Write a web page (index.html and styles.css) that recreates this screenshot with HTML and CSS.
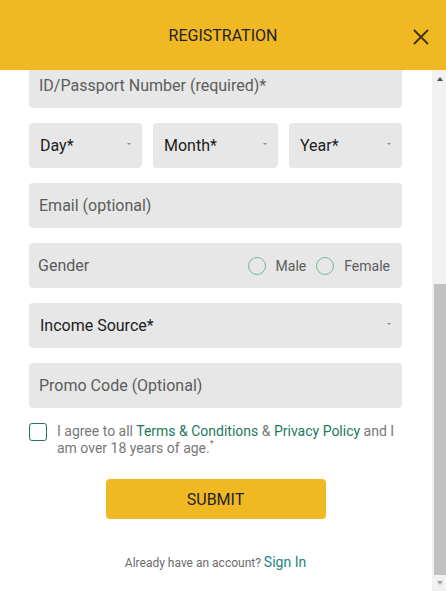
FILE: index.html
```html
<!DOCTYPE html>
<html lang="en">
<head>
  <meta charset="UTF-8">
  <meta name="viewport" content="width=device-width, initial-scale=1.0">
  <title>Registration</title>
  <link rel="stylesheet" href="styles.css">
</head>
<body>
  <div class="modal">
    <div class="modal-header">
      <h1 class="modal-title">REGISTRATION</h1>
      <button class="close-btn" aria-label="Close">
        <svg width="16" height="16" viewBox="0 0 16 16">
          <path d="M1 1 L15 15 M15 1 L1 15" stroke="#3a3216" stroke-width="1.8" fill="none"/>
        </svg>
      </button>
    </div>

    <div class="modal-main">
      <div class="modal-body" id="modal-body">
        <form class="form">
          <p class="intro">Please fill in your details below.</p>
          <input class="field" type="text" placeholder="First Name*">
          <input class="field" type="text" placeholder="Last Name*">
          <input class="field" type="tel" placeholder="Mobile Number*">
          <input class="field" type="password" placeholder="Password*">
          <input class="field" type="password" placeholder="Confirm Password*">
          <input class="field" type="text" placeholder="ID/Passport Number (required)*">

          <div class="date-row">
            <div class="select-wrap">
              <select class="field select"><option>Day*</option></select>
            </div>
            <div class="select-wrap">
              <select class="field select"><option>Month*</option></select>
            </div>
            <div class="select-wrap">
              <select class="field select"><option>Year*</option></select>
            </div>
          </div>

          <input class="field" type="email" placeholder="Email (optional)">

          <div class="field gender-row">
            <span class="gender-label">Gender</span>
            <div class="radios">
              <label class="radio"><input type="radio" name="gender"> Male</label>
              <label class="radio"><input type="radio" name="gender"> Female</label>
            </div>
          </div>

          <div class="select-wrap">
            <select class="field select"><option>Income Source*</option></select>
          </div>

          <input class="field" type="text" placeholder="Promo Code (Optional)">

          <label class="terms">
            <input type="checkbox" class="checkbox">
            <span class="terms-text">I agree to all <a href="#">Terms &amp; Conditions</a> &amp; <a href="#">Privacy Policy</a> and I am over 18 years of age.<sup>*</sup></span>
          </label>

          <button type="button" class="submit-btn">SUBMIT</button>

          <p class="signin">Already have an account? <a href="#">Sign In</a></p>
        </form>
      </div>

      <div class="scrollbar">
        <div class="scroll-btn up"></div>
        <div class="scroll-track">
          <div class="scroll-thumb"></div>
        </div>
        <div class="scroll-btn down"></div>
      </div>
    </div>
  </div>

  <script>
    // ouvrir le formulaire en bas
    const body = document.getElementById('modal-body');
    body.scrollTop = body.scrollHeight;
  </script>
</body>
</html>
```

FILE: styles.css
```css
* {
  box-sizing: border-box;
}
body {
  margin: 0;
  font-family: Roboto, 'Liberation Sans', sans-serif;
  background-color: #fff;
  color: #222;
}
.modal {
  height: 606px;
  display: flex;
  flex-direction: column;
  padding-bottom: 15px;
}
.modal-header {
  height: 70px;
  flex-shrink: 0;
  background-color: #f0b823;
  display: flex;
  align-items: center;
  justify-content: center;
  position: relative;
}
.modal-title {
  margin: 0;
  font-size: 16px;
  font-weight: 400;
  color: #222;
  padding-top: 1px;
}
.close-btn {
  position: absolute;
  right: 17px;
  top: 29px;
  width: 16px;
  height: 16px;
  padding: 0;
  border: none;
  background: none;
  cursor: pointer;
}
.close-btn svg {
  display: block;
}
.modal-main {
  flex: 1;
  min-height: 0;
  display: flex;
}
.modal-body {
  flex: 1;
  overflow-y: hidden;
}
.scrollbar {
  width: 14px;
  flex-shrink: 0;
  display: flex;
  flex-direction: column;
  background-color: #f1f1f1;
}
.scroll-btn {
  height: 16px;
  display: flex;
  align-items: center;
  justify-content: center;
  padding-left: 1px;
}
.scroll-btn.up::before {
  content: '';
  margin-top: 2px;
  border-left: 3.5px solid transparent;
  border-right: 3.5px solid transparent;
  border-bottom: 4px solid #505050;
}
.scroll-btn.down::before {
  content: '';
  margin-bottom: 1px;
  border-left: 3.5px solid transparent;
  border-right: 3.5px solid transparent;
  border-top: 4px solid #a3a3a3;
}
.scroll-track {
  flex: 1;
  display: flex;
  flex-direction: column;
  justify-content: flex-end;
}
.scroll-thumb {
  height: 291px;
  margin-left: 2px;
  background-color: #c1c1c1;
}
.form {
  display: flex;
  flex-direction: column;
  gap: 15px;
  padding: 20px 30px 18px 29px;
}
.intro {
  margin: 0;
  font-size: 13px;
  line-height: 12px;
  color: #777;
}
.field {
  height: 45px;
  width: 100%;
  border: none;
  border-radius: 4px;
  background-color: #e7e7e7;
  padding: 0 10px;
  font-family: inherit;
  font-size: 16px;
  color: #222;
  outline: none;
}
.field::placeholder {
  color: #5c5c5c;
}
.date-row {
  display: grid;
  grid-template-columns: 113fr 125fr 113fr;
  gap: 11px;
}
.select-wrap {
  position: relative;
}
.select-wrap::after {
  content: '';
  position: absolute;
  right: 11px;
  top: 20px;
  border-left: 2px solid transparent;
  border-right: 2px solid transparent;
  border-top: 2.5px solid #8a8a8a;
  pointer-events: none;
}
.select {
  appearance: none;
  -webkit-appearance: none;
  padding: 0 20px 0 11px;
  color: #1c1c1c;
}
.gender-row {
  display: flex;
  align-items: center;
  justify-content: space-between;
  padding: 0 12px 0 9px;
}
.gender-label {
  color: #5c5c5c;
}
.radios {
  display: flex;
  gap: 10px;
}
.radio {
  display: flex;
  align-items: center;
  gap: 10px;
  font-size: 14px;
  color: #5c5c5c;
}
.radio input {
  appearance: none;
  -webkit-appearance: none;
  width: 18px;
  height: 18px;
  margin: 0;
  border: 1.2px solid #72b8a1;
  border-radius: 50%;
}
.terms {
  display: flex;
  align-items: flex-start;
  gap: 10px;
  margin-top: 1px;
}
.checkbox {
  appearance: none;
  -webkit-appearance: none;
  flex-shrink: 0;
  width: 18px;
  height: 18px;
  margin: -1px 0 0;
  border: 1.5px solid #1f7d5d;
  border-radius: 3px;
}
.terms-text {
  margin-top: -1px;
  font-size: 14px;
  line-height: 17px;
  color: #777;
}
.terms-text a {
  color: #1c7a62;
  text-decoration: none;
}
.terms-text sup {
  font-size: 9px;
  line-height: 0;
}
.submit-btn {
  align-self: center;
  width: 220px;
  height: 40px;
  margin-top: 7px;
  border: none;
  border-radius: 4px;
  background-color: #f0b823;
  font-family: inherit;
  font-size: 16px;
  color: #222;
  cursor: pointer;
}
.signin {
  margin: 18px 0 0;
  text-align: center;
  font-size: 12px;
  line-height: 20px;
  color: #6b6b6b;
}
.signin a {
  font-size: 14px;
  color: #1d8584;
  text-decoration: none;
}
```
